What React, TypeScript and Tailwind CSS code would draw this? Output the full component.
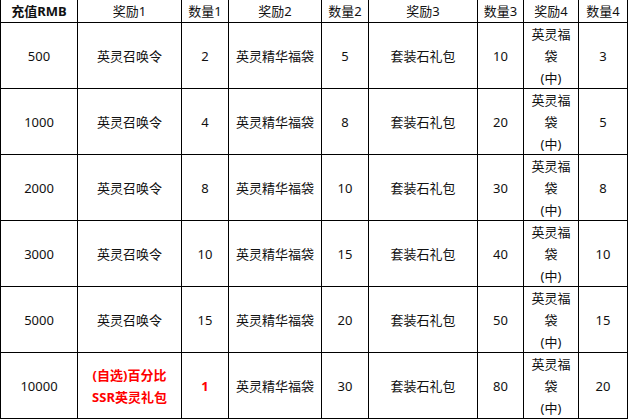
import React from 'react'

interface Row {
  rmb: string
  reward1: React.ReactNode
  count1: string
  highlight?: boolean
  count2: string
  count3: string
  count4: string
}

const rows: Row[] = [
  { rmb: '500', reward1: '英灵召唤令', count1: '2', count2: '5', count3: '10', count4: '3' },
  { rmb: '1000', reward1: '英灵召唤令', count1: '4', count2: '8', count3: '20', count4: '5' },
  { rmb: '2000', reward1: '英灵召唤令', count1: '8', count2: '10', count3: '30', count4: '8' },
  { rmb: '3000', reward1: '英灵召唤令', count1: '10', count2: '15', count3: '40', count4: '10' },
  { rmb: '5000', reward1: '英灵召唤令', count1: '15', count2: '20', count3: '50', count4: '15' },
  {
    rmb: '10000',
    reward1: (
      <>
        (自选)百分比
        <br />
        SSR英灵礼包
      </>
    ),
    count1: '1',
    highlight: true,
    count2: '30',
    count3: '80',
    count4: '20',
  },
]

const headers = ['充值RMB', '奖励1', '数量1', '奖励2', '数量2', '奖励3', '数量3', '奖励4', '数量4']

function Cell({ children, className = '' }: { children?: React.ReactNode; className?: string }) {
  return (
    <div className={`flex items-center justify-center bg-white text-center leading-[22px] ${className}`}>
      <div>{children}</div>
    </div>
  )
}

export default function App() {
  return (
    <div
      className="w-[629px] h-[420px] bg-white text-[13px] text-[#111]"
      style={{ fontFamily: '"Noto Sans", "Noto Sans CJK SC", sans-serif' }}
    >
      <div className="grid w-[628px] grid-cols-[76px_103px_46px_92px_46px_108px_45px_54px_48px] grid-rows-[22px_repeat(6,65px)] gap-px bg-black px-px pb-px">
        {headers.map((h, i) => (
          <Cell key={h} className={i === 0 ? 'font-bold' : ''}>
            {h}
          </Cell>
        ))}
        {rows.map((r) => (
          <React.Fragment key={r.rmb}>
            <Cell>{r.rmb}</Cell>
            <Cell className={r.highlight ? 'font-bold text-[#ff0000]' : ''}>{r.reward1}</Cell>
            <Cell className={r.highlight ? 'font-bold text-[#ff0000]' : ''}>{r.count1}</Cell>
            <Cell>英灵精华福袋</Cell>
            <Cell>{r.count2}</Cell>
            <Cell>套装石礼包</Cell>
            <Cell>{r.count3}</Cell>
            <Cell>
              英灵福
              <br />
              袋
              <br />
              (中)
            </Cell>
            <Cell>{r.count4}</Cell>
          </React.Fragment>
        ))}
      </div>
    </div>
  )
}
